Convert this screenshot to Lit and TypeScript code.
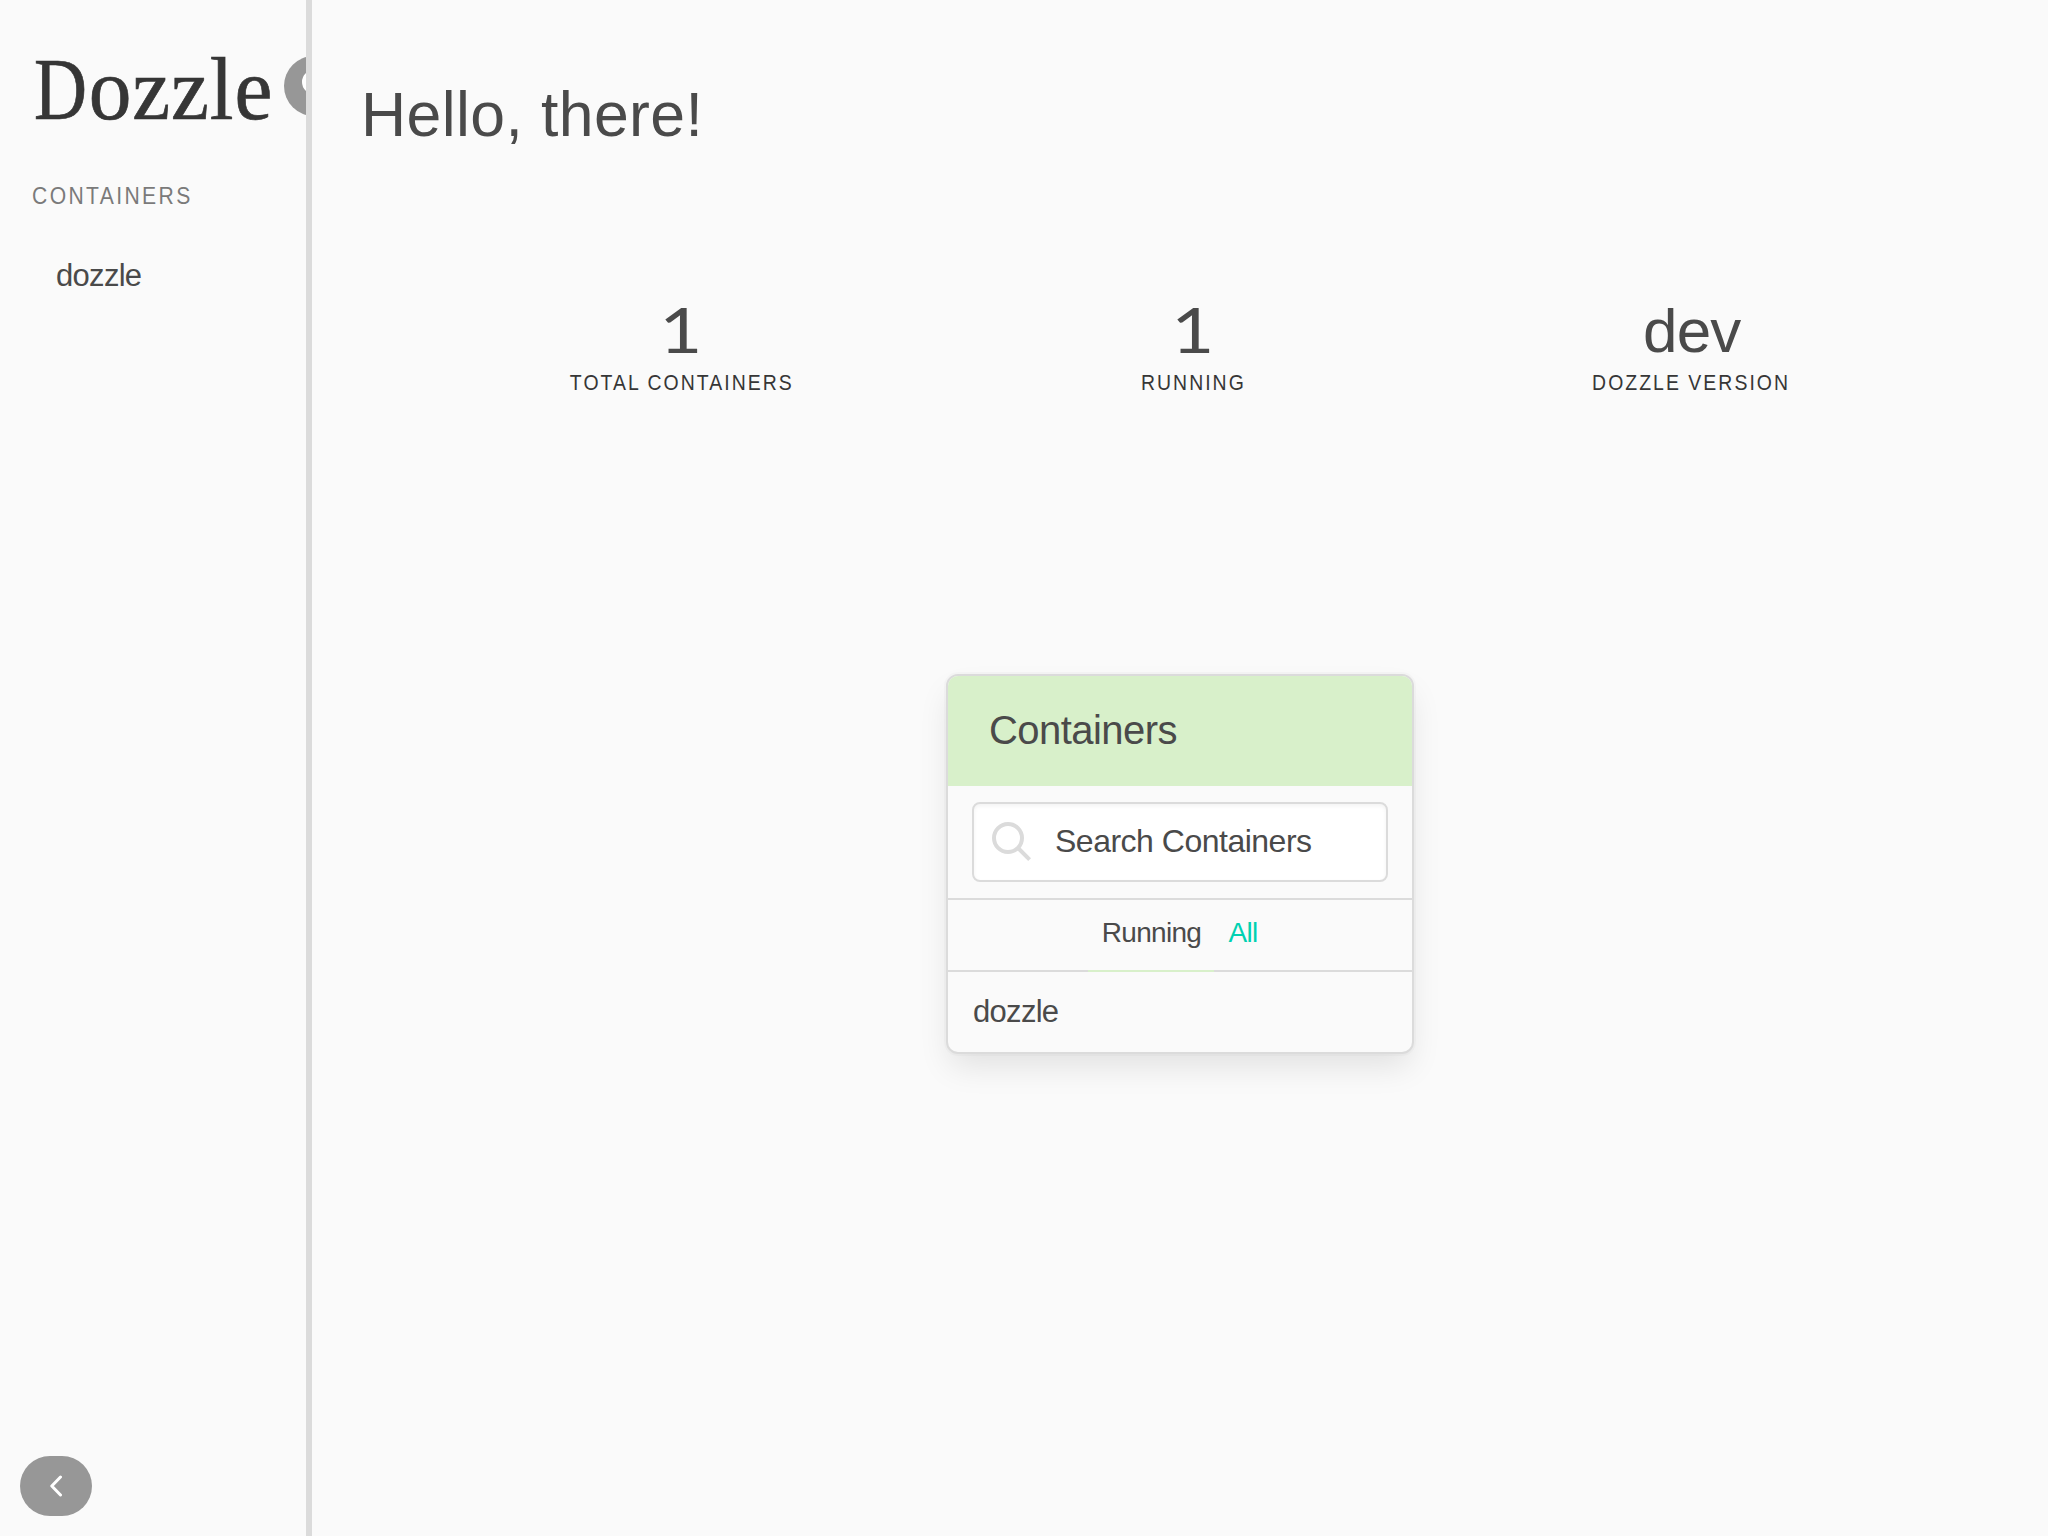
import { LitElement, html, css, svg } from "lit";
import { customElement, property } from "lit/decorators.js";

const searchIcon = svg`<circle cx="16" cy="16" r="14" /><path d="M26 26 L37.6 37.6" />`;

@customElement("side-menu")
class SideMenu extends LitElement {
  static styles = css`
    :host {
      display: flex;
      flex-direction: column;
      box-sizing: border-box;
      width: 306px;
      height: 1536px;
      padding: 40px 0 20px;
      overflow: hidden;
      flex: none;
    }
    .brand {
      display: flex;
      align-items: flex-start;
      height: 100px;
      padding-left: 34px;
    }
    .logo {
      margin: 0;
      width: 250px;
      flex: none;
      font: 400 88px/100px "Liberation Serif", serif;
      letter-spacing: 0.9px;
      color: #363636;
      -webkit-text-stroke: 0.7px #363636;
      transform: scaleX(0.97);
      transform-origin: 0 0;
      white-space: nowrap;
    }
    .initial {
      display: inline-block;
      transform: scaleX(0.86);
      transform-origin: 0 0;
      margin-right: -8px;
    }
    .round {
      display: flex;
      align-items: center;
      justify-content: center;
      box-sizing: border-box;
      width: 72px;
      height: 60px;
      padding: 0;
      border: 0;
      border-radius: 30px;
      background: #979797;
      flex: none;
    }
    .search {
      margin-top: 16px;
    }
    .round svg {
      display: block;
      fill: none;
      stroke: #fff;
      stroke-linecap: round;
      stroke-linejoin: round;
    }
    .label {
      margin: 40px 0 0 32px;
      font-size: 24px;
      line-height: 32px;
      color: #7a7a7a;
      letter-spacing: 2.7px;
      white-space: nowrap;
      transform: scaleX(0.88);
      transform-origin: 0 0;
    }
    .list {
      list-style: none;
      margin: 44px 0 0;
      padding: 0 0 0 56px;
      font-size: 31px;
      line-height: 40px;
      letter-spacing: -0.7px;
      color: #4a4a4a;
    }
    .collapse {
      margin: auto 0 0 20px;
    }
  `;

  render() {
    return html`
      <div class="brand">
        <h1 class="logo"><span class="initial">D</span>ozzle</h1>
        <button class="round search" aria-label="Search">
          <svg width="36" height="36" viewBox="0 0 36 36" stroke-width="4">
            <circle cx="12" cy="14" r="10" />
            <path d="M19.5 21.5 L28 30" />
          </svg>
        </button>
      </div>
      <p class="label">CONTAINERS</p>
      <ul class="list"><li>dozzle</li></ul>
      <button class="round collapse" aria-label="Collapse">
        <svg width="12" height="24" viewBox="0 0 12 24" stroke-width="3">
          <path d="M10.5 3 L1.8 12 L10.5 21" />
        </svg>
      </button>
    `;
  }
}

@customElement("stat-item")
class StatItem extends LitElement {
  @property() value = "";
  @property() label = "";

  static styles = css`
    :host {
      display: flex;
      flex-direction: column;
      align-items: center;
      white-space: nowrap;
    }
    .value {
      font-size: 62px;
      line-height: 74px;
      height: 73px;
      letter-spacing: -0.8px;
      padding-left: 2px;
      color: #4a4a4a;
    }
    .digit {
      font-family: Lato, sans-serif;
      font-size: 61px;
      line-height: 71px;
      padding-left: 0;
      transform: scaleX(1.22);
    }
    .label {
      margin-top: 1px;
      font-size: 22px;
      line-height: 30px;
      letter-spacing: 2.3px;
      margin-right: -1.6px;
      color: #363636;
      transform: scaleX(0.883);
    }
  `;

  render() {
    const digit = /^\d+$/.test(this.value);
    return html`
      <div class="value ${digit ? "digit" : ""}">${this.value}</div>
      <div class="label">${this.label}</div>
    `;
  }
}

@customElement("container-card")
class ContainerCard extends LitElement {
  static styles = css`
    :host {
      display: block;
      box-sizing: border-box;
      width: 468px;
      height: 380px;
      border: 2px solid #dbdbdb;
      border-radius: 12px;
      overflow: hidden;
      background: #fafafa;
      color: #4a4a4a;
      box-shadow: 0 16px 32px -4px rgba(10, 10, 10, 0.1), 0 0 0 2px rgba(10, 10, 10, 0.02);
    }
    .title {
      box-sizing: border-box;
      height: 110px;
      padding: 29px 0 0 41px;
      background: #d8f0ca;
      font-size: 40px;
      line-height: 50px;
      letter-spacing: -0.55px;
    }
    .search {
      padding: 16px 24px;
      border-bottom: 2px solid #dbdbdb;
    }
    .field {
      display: flex;
      align-items: center;
      box-sizing: border-box;
      width: 416px;
      height: 80px;
      padding-left: 18px;
      border: 2px solid #dbdbdb;
      border-radius: 8px;
      background: #fff;
      box-shadow: inset 0 2px 4px rgba(10, 10, 10, 0.05);
      font-size: 32px;
      letter-spacing: -0.5px;
    }
    .field span {
      padding-bottom: 2px;
    }
    .field svg {
      display: block;
      width: 40px;
      height: 40px;
      margin-right: 23px;
      fill: none;
      stroke: #dbdbdb;
      stroke-width: 4;
    }
    .tabs {
      display: flex;
      justify-content: center;
      height: 72px;
      box-sizing: border-box;
      border-bottom: 2px solid #dbdbdb;
      font-size: 28px;
      line-height: 66px;
      letter-spacing: -0.7px;
    }
    .tab {
      display: flex;
      justify-content: center;
      box-sizing: border-box;
      height: 72px;
      width: 58px;
      color: #00d1b2;
    }
    .active {
      width: 126px;
      padding-left: 1px;
      color: #4a4a4a;
      border-bottom: 2px solid #d8f0ca;
    }
    .row {
      padding: 20px 0 0 25px;
      font-size: 31px;
      line-height: 40px;
      letter-spacing: -0.7px;
    }
  `;

  render() {
    return html`
      <div class="title">Containers</div>
      <div class="search">
        <div class="field">
          <svg viewBox="0 0 40 40">${searchIcon}</svg>
          <span>Search Containers</span>
        </div>
      </div>
      <div class="tabs">
        <span class="tab active">Running</span>
        <span class="tab">All</span>
      </div>
      <div class="row">dozzle</div>
    `;
  }
}

@customElement("app-root")
class AppRoot extends LitElement {
  static styles = css`
    :host {
      display: flex;
      width: 2048px;
      height: 1536px;
      overflow: hidden;
      background: #fafafa;
      font-family: "Liberation Sans", Arial, sans-serif;
    }
    .gutter {
      width: 6px;
      flex: none;
      background: #dbdbdb;
    }
    .main {
      display: flex;
      flex-direction: column;
      flex: 1;
      padding-top: 74px;
    }
    .hello {
      margin: 0 0 0 49px;
      font-weight: 400;
      font-size: 62.5px;
      line-height: 80px;
      letter-spacing: 0.4px;
      color: #4a4a4a;
    }
    .stats {
      display: grid;
      grid-template-columns: 571.5px 452.5px 543.5px;
      margin: 140px 0 0 83px;
      height: 103px;
    }
    .card {
      margin: 277px 0 0 634px;
    }
  `;

  render() {
    return html`
      <side-menu></side-menu>
      <div class="gutter"></div>
      <main class="main">
        <h2 class="hello">Hello, there!</h2>
        <section class="stats">
          <stat-item value="1" label="TOTAL CONTAINERS"></stat-item>
          <stat-item value="1" label="RUNNING"></stat-item>
          <stat-item value="dev" label="DOZZLE VERSION"></stat-item>
        </section>
        <container-card class="card"></container-card>
      </main>
    `;
  }
}
